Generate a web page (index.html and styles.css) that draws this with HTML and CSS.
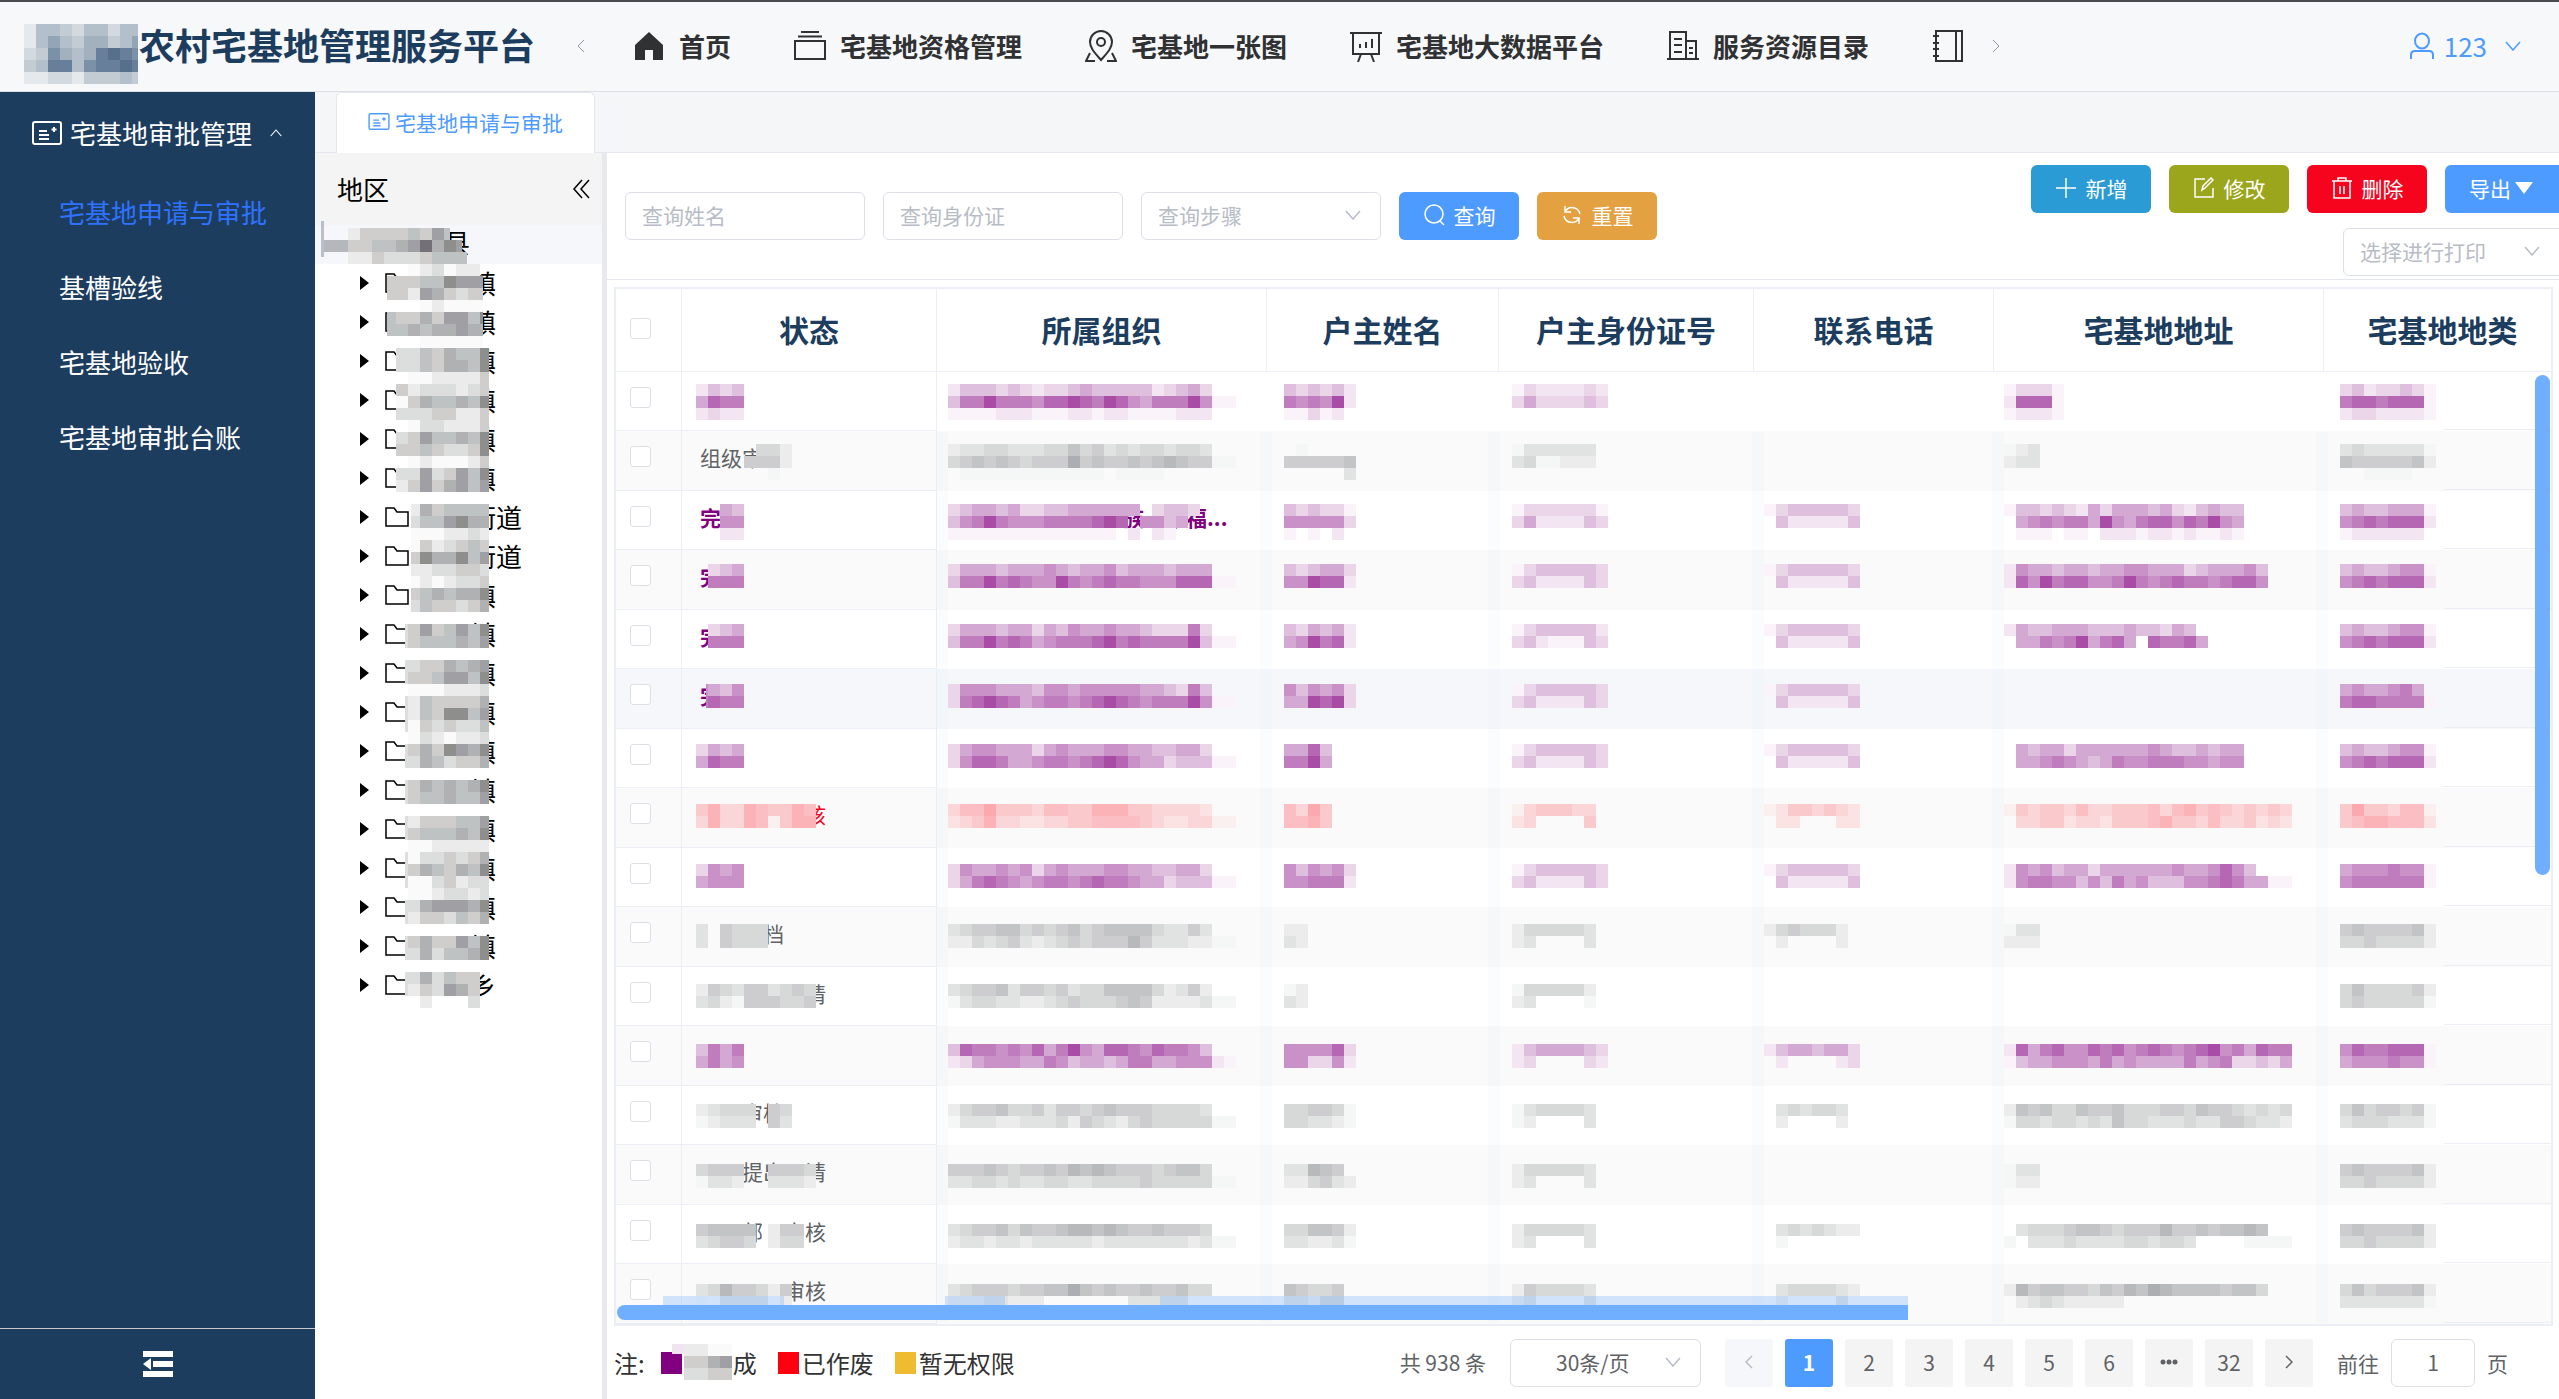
FILE: index.html
```html
<!DOCTYPE html>
<html lang="zh-CN">
<head>
<meta charset="utf-8">
<title>农村宅基地管理服务平台</title>
<link rel="stylesheet" href="styles.css">
</head>
<body>
<svg class="sprite" aria-hidden="true">
  <symbol id="down" viewBox="0 0 16 10"><path d="M1 1l7 8 7-8" fill="none" stroke="currentColor" stroke-width="1.5"/></symbol>
  <symbol id="card" viewBox="0 0 30 24"><rect x="1" y="1" width="28" height="22" rx="2" fill="none" stroke="currentColor" stroke-width="2"/><path d="M7 10h8M7 14h10M7 18h10M22 6v5M19.500 8.500h5" fill="none" stroke="currentColor" stroke-width="2"/></symbol>
  <symbol id="folder" viewBox="0 0 24 20"><path d="M1 1h8l3 4h11v14H1z" fill="none" stroke="currentColor" stroke-width="1.500"/></symbol>
</svg>
<header class="topbar">
  <h1 class="brand">农村宅基地管理服务平台</h1>
  <svg class="mask" data-region="logo" data-x="0" data-y="2"></svg>
  <button class="nav-arrow" aria-label="向左"><svg width="8" height="14" viewBox="0 0 8 14"><path d="M7 1L1 7l6 6" fill="none" stroke="currentColor"/></svg></button>
  <nav class="nav">
    <a href="#"><svg width="32" height="32" viewBox="0 0 32 32"><path d="M16 2L2 15v15h10V20h8v10h10V15z" fill="currentColor"/></svg>首页</a>
    <a href="#"><svg width="32" height="32" viewBox="0 0 32 32"><path d="M7 2h18M4 6.500h24M1 11h30v18H1z" fill="none" stroke="currentColor" stroke-width="2"/></svg>宅基地资格管理</a>
    <a href="#"><svg width="32" height="32" viewBox="0 0 32 32"><g fill="none" stroke="currentColor" stroke-width="2"><path d="M16 30C10 23 5 18 5 12a11 11 0 0 1 22 0c0 6-5 11-11 18z"/><circle cx="16" cy="12" r="4"/><path d="M5 23L1 31h9M27 23l4 8h-9"/></g></svg>宅基地一张图</a>
    <a href="#"><svg width="32" height="32" viewBox="0 0 32 32"><path d="M0 3h32M3 3v21h26V3M11 24l-3 8M21 24l3 8M10 18v-4M16 18v-6M22 18V9" fill="none" stroke="currentColor" stroke-width="2"/></svg>宅基地大数据平台</a>
    <a href="#"><svg width="32" height="32" viewBox="0 0 32 32"><path d="M0 29h32M3 29V2h16v27M19 11h10v18M7 9h8M7 15h8M7 22h8M22 18h4M22 23h4" fill="none" stroke="currentColor" stroke-width="2"/></svg>服务资源目录</a>
    <a href="#" aria-label="更多"><svg width="32" height="32" viewBox="0 0 32 32"><path d="M4 1h26v30H4zM24 1v30M1 6h6M1 13h6M1 19h6M1 26h6" fill="none" stroke="currentColor" stroke-width="2"/></svg></a>
  </nav>
  <button class="nav-arrow next" aria-label="向右"><svg width="8" height="14" viewBox="0 0 8 14"><path d="M1 1l6 6-6 6" fill="none" stroke="currentColor"/></svg></button>
  <button class="user"><svg width="24" height="28" viewBox="0 0 24 28"><g fill="none" stroke="currentColor" stroke-width="2"><ellipse cx="12" cy="9" rx="7" ry="7.500"/><path d="M1 27v-4c0-3 2-4 4-4h14c2 0 4 1 4 4v4"/></g></svg>123<svg class="user-caret" width="16" height="10"><use href="#down"/></svg></button>
</header>
<div class="shell">
  <aside class="sidebar">
    <button class="group"><svg width="30" height="24"><use href="#card"/></svg>宅基地审批管理<svg class="up" width="12" height="8" viewBox="0 0 16 10"><path d="M1 9l7-8 7 8" fill="none" stroke="currentColor" stroke-width="1.500"/></svg></button>
    <a class="item active" href="#">宅基地申请与审批</a>
    <a class="item" href="#">基槽验线</a>
    <a class="item" href="#">宅基地验收</a>
    <a class="item" href="#">宅基地审批台账</a>
    <button class="collapse" aria-label="收起"><svg width="30" height="26" viewBox="0 0 30 26"><path d="M0 0h30v6H0zM10 10h20v6H10zM0 20h30v6H0zM0 13l8-6v12z" fill="currentColor"/></svg></button>
  </aside>
  <main class="content">
    <div class="tabs"><a class="tab" href="#"><svg width="22" height="17"><use href="#card"/></svg>宅基地申请与审批</a></div>
    <div class="workspace">
      <section class="region">
        <div class="region-head">地区<button aria-label="收起地区"><svg width="18" height="20" viewBox="0 0 18 20"><path d="M10 1L2 10l8 9M17 1l-8 9 8 9" fill="none" stroke="currentColor" stroke-width="1.500"/></svg></button></div>
        <ul class="tree" id="tree"><li class="root">县</li></ul>
        <svg class="mask" data-region="tree" data-x="315" data-y="153"></svg>
      </section>
      <section class="panel">
        <div class="filters">
          <form class="search">
            <input type="text" aria-label="查询姓名" placeholder="查询姓名">
            <input type="text" aria-label="查询身份证" placeholder="查询身份证">
            <span class="select"><select aria-label="查询步骤"><option>查询步骤</option></select><svg width="16" height="10"><use href="#down"/></svg></span>
            <button type="button" class="btn blue"><svg width="22" height="22" viewBox="0 0 22 22"><g fill="none" stroke="currentColor" stroke-width="1.500"><circle cx="11" cy="10" r="9"/><path d="M17 17l4 4"/></g></svg>查询</button>
            <button type="button" class="btn orange"><svg width="22" height="22" viewBox="0 0 22 22"><path d="M4 8a8 8 0 0 1 15 2M18 14a8 8 0 0 1-15-2M4 2v6h6M18 20v-6h-6" fill="none" stroke="currentColor" stroke-width="1.500"/></svg>重置</button>
          </form>
          <div class="actions">
            <div class="action-row">
              <button class="btn sky"><svg width="22" height="22" viewBox="0 0 22 22"><path d="M11 1v20M1 11h20" stroke="currentColor" stroke-width="1.500"/></svg>新增</button>
              <button class="btn olive"><svg width="22" height="22" viewBox="0 0 22 22"><path d="M12 2H2v18h18v-9M9 13l1-4 8-8 2 2-8 8z" fill="none" stroke="currentColor" stroke-width="1.500"/></svg>修改</button>
              <button class="btn red"><svg width="22" height="22" viewBox="0 0 22 22"><path d="M1 4h20M7 4V1h8v3M3 4v17h16V4M9 9v8M13 9v8" fill="none" stroke="currentColor" stroke-width="1.500"/></svg>删除</button>
              <button class="btn blue export">导出<svg width="18" height="12" viewBox="0 0 18 12"><path d="M0 0h18L9 12z" fill="currentColor"/></svg></button>
            </div>
            <span class="select print"><select aria-label="选择进行打印"><option>选择进行打印</option></select><svg width="16" height="10"><use href="#down"/></svg></span>
          </div>
        </div>
        <div class="grid">
          <table>
            <colgroup><col class="w-check"><col class="w-mid"><col class="w-wide"><col class="w-name"><col class="w-mid"><col class="w-phone"><col class="w-wide"><col></colgroup>
            <thead><tr><th><input type="checkbox" aria-label="全选"></th><th>状态</th><th>所属组织</th><th>户主姓名</th><th>户主身份证号</th><th>联系电话</th><th>宅基地地址</th><th class="last">宅基地地类</th></tr></thead>
            <tbody id="rows"></tbody>
          </table>
          <svg class="mask" data-region="table" data-x="616" data-y="289"></svg>
          <div class="bar-v"></div>
          <div class="bar-h"></div>
          <svg class="mask" data-region="band" data-x="616" data-y="289"></svg>
        </div>
        <footer class="foot">
          <div class="legend">注:<span><i class="done"></i>　　成</span><span><i class="void"></i>已作废</span><span><i class="deny"></i>暂无权限</span></div>
          <div class="pager">
            <span class="total">共 938 条</span>
            <span class="select size"><select aria-label="每页条数"><option>30条/页</option></select><svg width="16" height="10"><use href="#down"/></svg></span>
            <div class="pages">
              <button class="prev" aria-label="上一页"><svg width="8" height="14" viewBox="0 0 8 14"><path d="M7 1L1 7l6 6" fill="none" stroke="currentColor" stroke-width="1.500"/></svg></button>
              <button class="current">1</button><button>2</button><button>3</button><button>4</button><button>5</button><button>6</button><button aria-label="更多页"><svg width="18" height="6"><g fill="currentColor"><circle cx="3" cy="3" r="2.500"/><circle cx="9" cy="3" r="2.500"/><circle cx="15" cy="3" r="2.500"/></g></svg></button><button>32</button>
              <button aria-label="下一页"><svg width="8" height="14" viewBox="0 0 8 14"><path d="M1 1l6 6-6 6" fill="none" stroke="currentColor" stroke-width="1.500"/></svg></button>
            </div>
            <label class="jump">前往<input type="text" value="1">页</label>
          </div>
          <svg class="mask" data-region="legend" data-x="607" data-y="1326"></svg>
        </footer>
      </section>
    </div>
  </main>
</div>
<script src="app.js"></script>
</body>
</html>
```

FILE: styles.css
```css
* { box-sizing: border-box; }
body {
  margin: 0;
  min-height: 100vh;
  display: flex;
  flex-direction: column;
  font: 21px/28px "Noto Sans CJK SC", sans-serif;
  color: #606266;
  background: #fff;
  overflow-x: hidden;
}
button, input, select { font: inherit; color: inherit; }
button { border: 0; padding: 0; background: none; display: flex; align-items: center; justify-content: center; }
a { color: inherit; text-decoration: none; }
svg { display: block; flex: none; }
.sprite { position: absolute; width: 0; height: 0; }
.mask { position: absolute; left: 0; top: 0; width: 100%; height: 100%; pointer-events: none; }

.topbar {
  position: relative;
  display: flex;
  align-items: center;
  height: 92px;
  border-top: 2px solid #4a4a4e;
  border-bottom: 1px solid #dcdfe6;
  background: #f7f8fa;
  padding: 0 38px 2px 139px;
  color: #303133;
}
.brand { margin: 0; padding-bottom: 3px; font-size: 36px; line-height: 48px; font-weight: 700; color: #1d3d5f; white-space: nowrap; }
.nav-arrow { margin-left: 42px; width: 8px; color: #909399; }
.nav-arrow.next { margin-left: 28px; }
.nav { display: flex; gap: 63px; margin-left: 48px; font-size: 26px; font-weight: 700; }
.nav a { display: flex; align-items: center; gap: 14px; white-space: nowrap; }
.user { margin-left: auto; gap: 10px; font-size: 26px; color: #4e9bff; }
.user-caret { margin-left: 8px; }

.shell { flex: 1; display: flex; }
.sidebar { width: 315px; flex: none; display: flex; flex-direction: column; background: #1d3d5f; color: #fff; font-size: 26px; }
.group { height: 82px; padding: 0 0 0 32px; justify-content: flex-start; gap: 8px; }
.up { margin-left: 10px; }
.item { height: 75px; line-height: 75px; padding-left: 59px; }
.item.active { color: #2e73ff; }
.collapse { margin-top: auto; height: 71px; border-top: 1px solid #c8c8cc; }

.content { flex: 1; min-width: 0; display: flex; flex-direction: column; }
.tabs { height: 61px; padding-left: 21px; background: #f5f6f8; border-bottom: 1px solid #e4e7ed; display: flex; }
.tab { height: 61px; width: 259px; padding: 0 0 3px 31px; display: flex; align-items: center; gap: 5px; color: #4e9bff; background: #fff; border: 1px solid #e4e7ed; border-bottom: 0; border-radius: 6px 6px 0 0; }
.workspace { flex: 1; display: flex; min-width: 0; }

.region { position: relative; width: 292px; flex: none; border-right: 5px solid #e8e9eb; color: #000; font-size: 26px; }
.region-head { height: 72px; padding: 0 12px 0 22px; display: flex; align-items: center; justify-content: space-between; background: #f4f4f4; }
.tree { margin: 0; padding: 0; list-style: none; }
.tree li { height: 39px; display: flex; align-items: center; padding: 0 0 2px 44px; }
.tree .root { padding: 0 0 6px 129px; background: #f5f7fb; }
.tree .arrow { width: 10px; margin-right: 16px; }
.tree .label { margin-left: 9px; white-space: pre; }

.panel { flex: 1; min-width: 0; display: flex; flex-direction: column; overflow: hidden; }
.filters { height: 127px; display: flex; justify-content: space-between; padding-left: 18px; border-bottom: 1px solid #e4e7ed; }
.search { display: flex; gap: 18px; padding-top: 39px; }
input[type="text"], select { height: 48px; border: 1px solid #dcdfe6; border-radius: 6px; background: #fff; outline: 0; }
.search input { width: 240px; padding: 0 16px 3px; }
input::placeholder { color: #b8bcc6; opacity: 1; }
.select { position: relative; height: 48px; }
.select select { width: 100%; padding: 0 16px 3px; appearance: none; color: #b8bcc6; }
.select svg { position: absolute; right: 20px; top: 18px; color: #b8bcc6; }
.search .select { width: 240px; }
.btn { width: 120px; height: 48px; padding-bottom: 2px; gap: 9px; border-radius: 6px; color: #fff; flex: none; }
.blue { background: #4e9bff; }
.orange { background: #e4a142; }
.sky { background: #2b9bd6; }
.olive { background: #9ba61c; }
.red { background: #f6041e; }
.actions { display: flex; flex-direction: column; align-items: flex-end; gap: 15px; padding-top: 12px; margin-right: -6px; }
.action-row { display: flex; gap: 18px; }
.export { gap: 4px; padding-right: 8px; }
.print { width: 222px; }
.print svg { right: 25px; }

.grid { position: relative; margin: 7px 6px 0 7px; border: 2px solid #ebeef5; }
table { width: 100%; table-layout: fixed; border-collapse: separate; border-spacing: 0; }
.w-check { width: 66px; }
.w-mid { width: 255px; }
.w-wide { width: 330px; }
.w-name { width: 232px; }
.w-phone { width: 240px; }
th { height: 83px; padding: 0 0 3px; font-size: 30px; line-height: 40px; font-weight: 700; color: #1d3d5f; border-right: 1px solid #ebeef5; border-bottom: 1px solid #ebeef5; white-space: nowrap; }
th.last { padding-left: 10px; border-right: 0; }
td { height: 59px; padding: 0 0 7px 18px; white-space: pre; overflow: hidden; border-bottom: 1px solid transparent; }
tr:nth-child(even) td { height: 60px; background-color: #fafafa; }
tr.hover td, tr.hover:nth-child(even) td { background-color: #f5f7fb; }
td:first-child, td:nth-child(2) { border-right: 1px solid #ebeef5; border-bottom-color: #ebeef5; }
td:last-child { background-image: linear-gradient(to right, transparent 120px, #ebeef5 120px); background-size: 100% 1px; background-position: bottom; background-repeat: no-repeat; }
td:first-child { padding: 0 0 8px; }
input[type="checkbox"] { display: block; margin: 0 auto 0 14px; width: 21px; height: 21px; appearance: none; border: 1px solid #dcdfe6; border-radius: 3px; background: #fff; }
tr.p td { color: #800080; font-weight: 700; }
tr.r td { color: #f6041e; }
.bar-v { position: absolute; right: 1px; top: 86px; width: 15px; height: 500px; border-radius: 8px; background: #70aeff; }
.bar-h { position: absolute; left: 1px; bottom: 4px; width: 1291px; height: 15px; border-radius: 8px 0 0 8px; background: #70aeff; }

.foot { position: relative; flex: 1; display: flex; justify-content: space-between; padding: 13px 51px 0 7px; }
.legend { display: flex; align-items: center; height: 48px; font-size: 24px; color: #333; }
.legend span { display: flex; align-items: center; white-space: pre; margin-left: 21px; }
.legend span:first-of-type { margin-left: 16px; }
.legend i { width: 21px; height: 22px; margin-right: 3px; }
.done { background: #800080; }
.void { background: #ff0011; }
.deny { background: #efbb30; }
.pager { display: flex; align-items: center; height: 48px; }
.total { margin-right: 24px; padding-bottom: 3px; white-space: nowrap; }
.size { width: 191px; margin-right: 24px; }
.size select { color: #606266; padding-left: 45px; }
.pages { display: flex; gap: 12px; }
.pages button { width: 48px; height: 48px; padding-bottom: 3px; border-radius: 3px; background: #f4f4f5; }
.pages .prev { background: #f5f7fb; color: #b8bcc6; }
.pages .current { background: #4e9bff; color: #fff; font-weight: 700; }
.jump { display: flex; align-items: center; margin-left: 24px; }
.jump input { width: 84px; margin: 0 12px; padding-bottom: 3px; text-align: center; }
```

FILE: app.js
```js
// Privacy mosaic: every block is CELL px wide, digits give the shade (0 = clear).
const CELL = 12;
const SHADES = {
  p: ['', '#faf4fa', '#f3e6f2', '#ead5e9', '#debfde', '#d3a8d3', '#c991c8', '#c07dbe', '#b667b3', '#a84ca6'],
  g: ['', '#f5f6f6', '#ececec', '#e1e2e2', '#d7d8d8', '#cdcdcf', '#c3c4c6', '#b8b9bb', '#adaeb1', '#9b9b9f'],
  r: ['', '#fbf0f0', '#fbe3e4', '#fad6d8', '#fac9cc', '#fbbec2', '#fbb3b8', '#fba8ae', '#fba8ae', '#fba8ae'],
  t: ['', '#fafafa', '#ebebec', '#dcdddd', '#cfcecc', '#bfc2c3', '#afb1b3', '#a09fa3', '#8e8e8d', '#747077'],
  b: ['', '#e6e9eb', '#d2d9df', '#c3ccd3', '#b3bfca', '#a3b0be', '#93a6b8', '#7b91a8', '#677f9a', '#566f8b']
};

function painter(region) {
  const svg = document.querySelector(`.mask[data-region="${region}"]`);
  const ox = +svg.dataset.x, oy = +svg.dataset.y;
  const box = (x, y, w, h, fill) => {
    const r = document.createElementNS('http://www.w3.org/2000/svg', 'rect');
    Object.entries({ x: x - ox, y: y - oy, width: w, height: h, fill, 'shape-rendering': 'crispEdges' })
      .forEach(([k, v]) => r.setAttribute(k, v));
    svg.append(r);
  };
  const cells = (tone, cx, cy, lines, min = 0, max = 9999) => lines.split('/').forEach((line, j) =>
    [...line].forEach((d, i) => {
      const l = Math.max(min, (cx + i) * CELL), r = Math.min(max, (cx + i + 1) * CELL);
      if (+d && r > l) box(l, (cy + j) * CELL, r - l, CELL, SHADES[tone][d]);
    }));
  return { box, cells };
}

// Region tree
const tree = document.getElementById('tree');
for (let i = 0; i < 19; i++) {
  const name = i === 6 || i === 7 ? '　　街道' : i === 18 ? '　　乡' : '　　镇';
  tree.insertAdjacentHTML('beforeend', `<li><svg class="arrow" width="10" height="14"><path d="M1 0l9 7-9 7z"/></svg><svg width="24" height="20"><use href="#folder"/></svg><span class="label">${name}</span></li>`);
}
const t = painter('tree');
t.box(321, 221, 3, 36, '#b8c0cc');
t.box(324, 240, 24, 12, '#b4b7bc');
t.cells('t', 29, 19, '24444547500', 0, 450);
t.cells('t', 29, 20, '44556796877', 0, 462);
t.cells('t', 29, 21, '22433345555', 0, 467);
t.cells('t', 32, 22, '001231220/444558777/442764344/000121111/544647758/556566766/000111111', 387, 483);
t.cells('t', 32, 29, '033546558/033546658/001122224/042333234/014655658/033344224/001332224/034755658/044543348/001211124/033734758/024746757/0', 396, 489);
t.cells('t', 32, 42, '002645555/003557866/001112232/001423454/004866857/002233443/001212334/004565668/003544346', 411, 489);
t.cells('t', 32, 52, '034745758/034555657/0/033446567/034457758/001112223/032544446/032548857/031434335/001321223/034648768/033653446/0/034656568/034556557/0/032444557/034555658/001122222/031334346/034654658/031134233/001123323/033677768/032443546/0/034644758/033635568/0/033635440/032437640/000200030', 405, 489);

// Header logo
const logo = painter('logo');
logo.cells('b', 2, 2, '144324424455/146435534677/237545898799/348847889899/112213334330', 24, 138);

// Table: tone, visible status text, then mosaics by column
const COLS = [58, 79, 107, 126, 147, 167, 195];
const ID = '13444443/34222243', TEL = '13444443/04222224', TYPE = '45445661/67878882';
const GID = '2444443/2300003', GTYPE = '56555562/44544442';
const ROWS = [
  ['p', '', '2434/5877/2322', '2444343233454444423453/477977768898798657779611/1111222111221221111222', '434342/767692/113120', '13222232/35333343', '', '13331/28881/12221', '34233431/78878881/23322221'],
  ['g', '组级审', '00000442/00005552/0000001', '2334433344645343443443/456565455585655656765511/0111111111111011110', '010000/555556/000003', '1333333/3411222', '', '123/233', '34333331/65555562/0011110'],
  ['p', '完成', '0054/0066/0022', '3455453344555555034430/4679766677778980664500/1111111111111102021', '434331/666663/101020', '13333331/35222243', TEL, '14434325355545324544/05676775965788687965/01110110222122121121', '45445551/67878882/1222222'],
  ['p', '完', '0345/0777', '3555455565455645554555/477978766976787766688811', '434553/669882', ID, TEL, '2655455455665553455564/2869788667976787767886', TYPE],
  ['p', '完', '0345/0777', '3555455354655655433373/477978756777897877779411', '435452/569782', '13444442/34211143', TEL, '2544555444544354/05576795785087785', TYPE],
  ['p', '完', '6546/7877', '3666555466566666554374/378987567767898767779611', '646563/559893', ID, TEL, '', '56556750/78877771'],
  ['p', '', '3545/5877', '3566555356555665544553/368875567767898655344411', '5584/7795', ID, TEL, '05455355555565445455/05567654576677766566', TYPE],
  ['r', '　　　　　核', '4633654465/3633651466', '3557444355446664433332/234633223344555543223311', '5374/5564', '1344433/2300004', '12443432/02200022', '143443533444535645434343/033442332444564435334232', '47443551/45665552'],
  ['p', '', '3656/5666', '3655656356555665544553/357876567767877655344411', '646563/667772', ID, TEL, '2656455355555565568640/267766464756444667875511', '56667661/67777771'],
  ['g', '　　　档', '30544400/30544400', '3455664545645666643353/224345323454555753332211', '22/32', GID, '2454442/0200002', '133/222', GTYPE],
  ['g', '　　　　　请', '2543553454/3421555445', '3455635545344666642352/134433223454445652222311', '12/32', '1444442/2300001', '', '', '46444452/45444441'],
  ['p', '', '4757/5756', '4877676857965887687764/235666557645545775566621', '666683/663362', '24555543/23000032', '24554553/02000023', '285786687867876789675877/145566657565555756733435', '68778881/56667661'],
  ['g', '　　审核', '23444054/12333053', '2455644535545655544443/133322333425432454444411', '445541/443321', '1344443/1200003', '0343443/0200002', '265644655644455465543434/144344343644333433554332', '46455451/34443331'],
  ['g', '　　提出　请', '4555005554/1332003332', '5556545565767655545664/334434334433444454444411', '337650/224532', GID, '', '133/122', GTYPE],
  ['g', '　　部　审核', '5666602550/3455402440', '3455646556776765565554/233233233333233333332311', '446652/332231', GID, '03434322/01', '034445665455575565667600/103334333344344300001111', GTYPE],
  ['g', '　　　　审核', '34755425/10333302', '3455545566865655655644/22233222000000033333', '654450/332440', '2544443/2300003', '03444432/02000030', '2756655465768766665664/0234322222', '46455562/33333331']
];
const body = document.getElementById('rows'), m = painter('table');
[78, 105, 124, 146, 166, 193].forEach(c => m.box(c * CELL, 432, CELL, 890, 'rgba(228,234,244,.14)'));
ROWS.forEach(([tone, text, ...parts], i) => {
  const org = i === 2 ? '　　　　　　　　族　幸福...' : '';
  const cls = i === 5 ? tone + ' hover' : tone;
  body.insertAdjacentHTML('beforeend', `<tr class="${cls}"><td><input type="checkbox" aria-label="选择第${i + 1}行"></td><td>${text}</td><td>${org}</td><td></td><td></td><td></td><td></td><td></td></tr>`);
  parts.forEach((p, c) => p && m.cells(tone, COLS[c], 32 + i * 5, p, i === 5 && c === 0 ? 706 : 0));
});

// Stretched edge of the horizontal scrollbar
const band = painter('band');
[[663, 121], [945, 60], [1160, 748]].forEach(([x, w]) => band.box(x, 1296, w, 9, 'rgba(112,174,255,.3)'));

// Legend
const leg = painter('legend');
leg.box(672, 1344, 12, 10, '#f1e4f1');
leg.cells('t', 57, 112, '2211/4467/3344', 682, 733);
```
